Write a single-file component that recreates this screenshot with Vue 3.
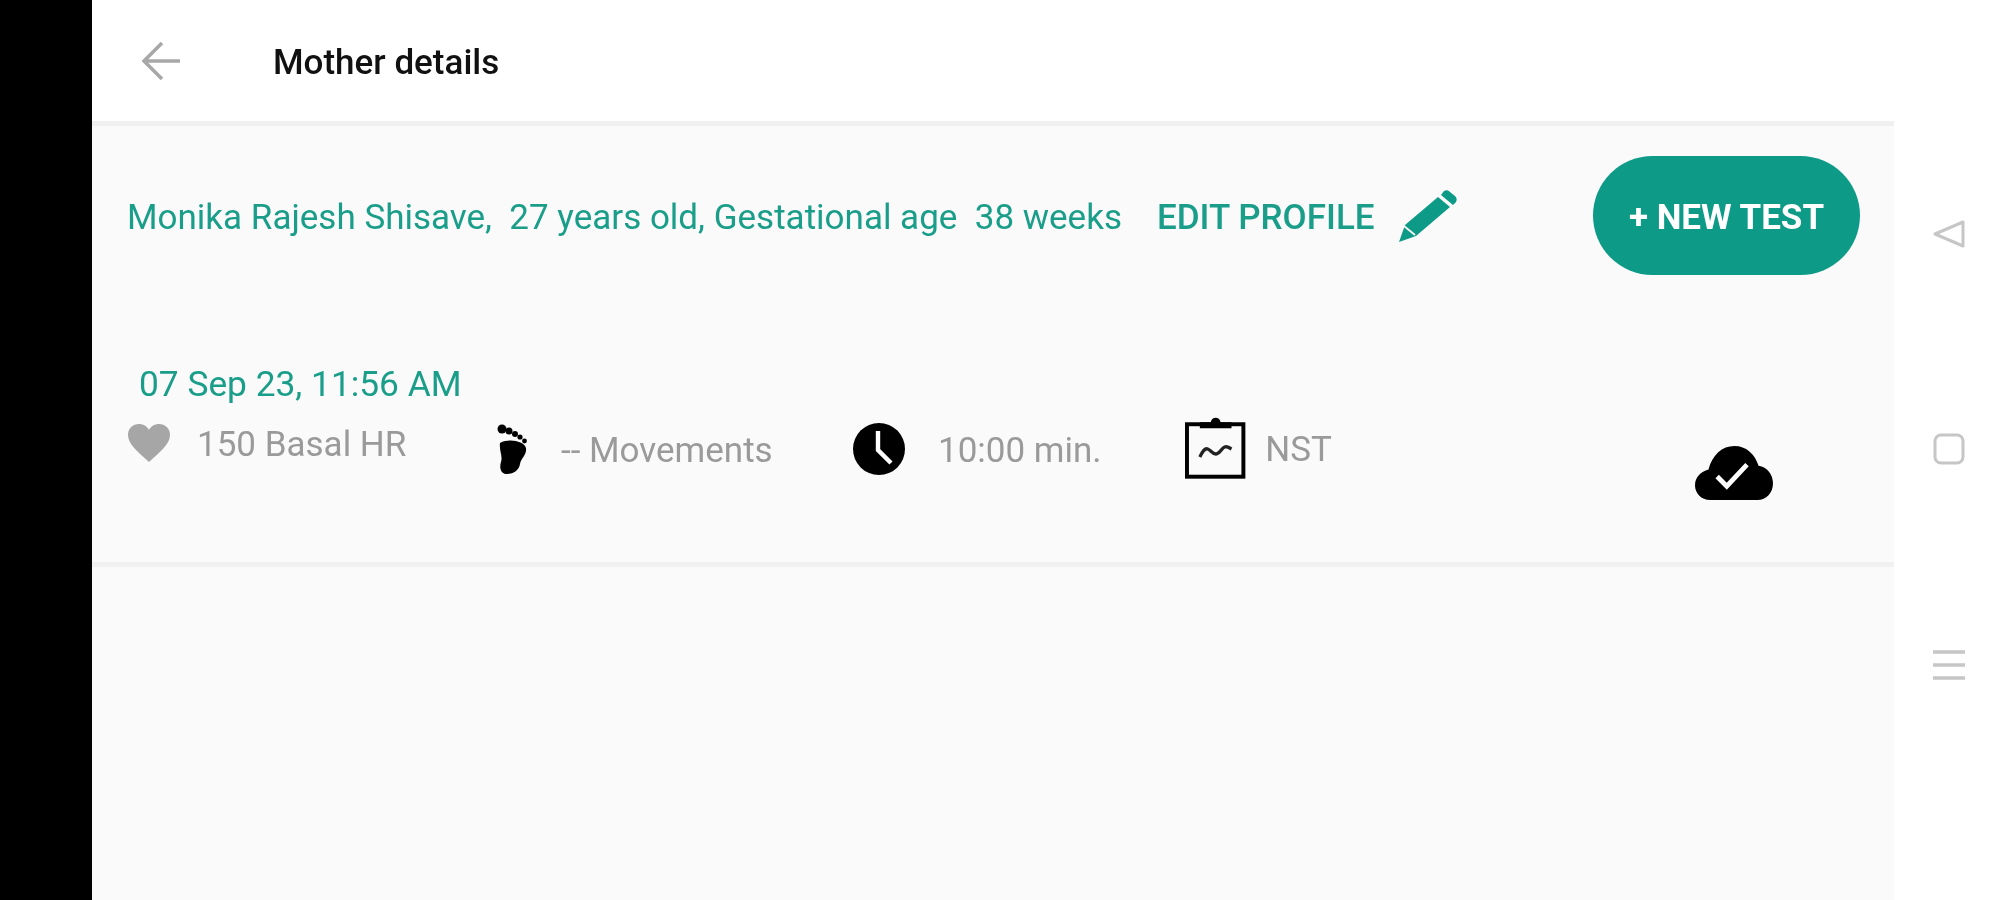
<template>
  <div class="screen">
    <div class="left-edge"></div>

    <div class="main">
      <header class="topbar">
        <svg class="back" viewBox="0 0 40 40" width="40" height="40">
          <path d="M38 20H3M20 2L2 20l18 18" fill="none" stroke="#a8a8a8" stroke-width="3.6" />
        </svg>
        <span class="title">Mother details</span>
      </header>

      <section class="record">
        <div class="patient">
          <span class="patient-name">{{ patientLine }}</span>
          <span class="edit">EDIT PROFILE</span>
          <svg class="pencil" viewBox="0 0 60 52" width="60" height="52">
            <path d="M47 1c2-1 4-1 6 1l5 4c2 2 2 4 1 6l-3 3-12-10zM41 7l12 10-34 29-17 6 6-17z" fill="#0d9b87" />
            <path d="M7 36l11 9" stroke="#fafafa" stroke-width="1.8" />
          </svg>
          <button class="new-test">+ NEW TEST</button>
        </div>

        <div class="record-date">07 Sep 23, 11:56 AM</div>

        <div class="stats">
          <div class="stat stat-hr">
            <svg viewBox="0 0 42 38" width="42" height="38">
              <path d="M21 38C9 27 0 20 0 11 0 4 5 0 11 0c4 0 8 2 10 6 2-4 6-6 10-6 6 0 11 4 11 11 0 9-9 16-21 27z" fill="#a6a6a6" />
            </svg>
            <span>150 Basal HR</span>
          </div>
          <div class="stat stat-move">
            <svg viewBox="0 0 32 50" width="32" height="50">
              <circle cx="5" cy="5" r="4.5" />
              <circle cx="12" cy="7" r="3.5" />
              <circle cx="18" cy="10" r="3" />
              <circle cx="23" cy="13" r="2.6" />
              <circle cx="27.5" cy="17" r="2.4" />
              <path d="M3 19C12 14 27 17 29 24c1 7-5 10-6 16-1 7-8 10-13 10-6 0-8-6-6-12 2-6-2-11-1-19z" />
            </svg>
            <span>-- Movements</span>
          </div>
          <div class="stat stat-time">
            <svg viewBox="0 0 52 52" width="52" height="52">
              <circle cx="26" cy="26" r="26" />
              <path d="M25 8v19l13 13" fill="none" stroke="#fff" stroke-width="4.4" />
            </svg>
            <span>10:00 min.</span>
          </div>
          <div class="stat stat-type">
            <svg viewBox="0 0 62 62" width="62" height="62">
              <rect x="2" y="7" width="57" height="53" fill="none" stroke="#000" stroke-width="4" />
              <path d="M15 5h11c1-6 9-6 10 0h11v6H15z" />
              <path d="M15 40c3-6 5-9 8-8s5 6 9 5 5-6 8-7 5 1 7 2" fill="none" stroke="#222" stroke-width="3.4" />
            </svg>
            <span>NST</span>
          </div>
          <svg class="cloud" viewBox="0 0 81 55" width="78" height="54" preserveAspectRatio="none">
            <path d="M16 55C6 55 0 48 0 40c0-8 6-14 14-16C18 9 28 0 41 0c12 0 21 8 25 20 9 1 15 9 15 18 0 10-7 17-16 17z" />
            <path d="M23 31l10 10 21-22" fill="none" stroke="#fff" stroke-width="5" />
          </svg>
        </div>
      </section>
    </div>

    <nav class="nav-rail">
      <svg viewBox="0 0 32 28" width="32" height="28">
        <path d="M2 14L30 2v24z" fill="none" stroke="#c6c6c6" stroke-width="3" stroke-linejoin="round" />
      </svg>
      <svg viewBox="0 0 32 32" width="32" height="32">
        <rect x="2" y="2" width="28" height="28" rx="6" fill="none" stroke="#c6c6c6" stroke-width="3" />
      </svg>
      <svg viewBox="0 0 32 32" width="32" height="32">
        <path d="M0 2h32M0 15h32M0 28h32" stroke="#c6c6c6" stroke-width="3.4" />
      </svg>
    </nav>
  </div>
</template>

<script setup>
const patientLine = 'Monika Rajesh Shisave,\u00a0 27 years old, Gestational age\u00a0 38 weeks'
</script>

<style>
html,
body {
  margin: 0;
  background: #fff;
}
</style>

<style scoped>
/* the source is a soft, upscaled capture, hence the slight blur */
.screen {
  display: flex;
  width: 2003px;
  height: 900px;
  overflow: hidden;
  font-family: Roboto, "Liberation Sans", sans-serif;
  background: #fff;
  filter: blur(0.6px);
}

.left-edge {
  width: 92px;
  flex-shrink: 0;
  background: #000;
}

.main {
  width: 1802px;
  flex-shrink: 0;
  background: #fafafa;
}

.topbar {
  display: flex;
  align-items: center;
  height: 121px;
  padding-left: 50px;
  background: #fff;
  border-bottom: 5px solid #f0f0f0;
}

.title {
  margin: 4px 0 0 91px;
  font-size: 35px;
  font-weight: 500;
  color: #111;
}

.record {
  height: 441px;
  box-sizing: border-box;
  border-bottom: 5px solid #f1f1f1;
}

.patient {
  display: flex;
  align-items: center;
  padding: 30px 34px 0 35px;
}

.patient-name {
  margin-top: 4px;
  font-size: 35px;
  color: #1a9e8a;
  white-space: nowrap;
}

.edit {
  margin: 4px 0 0 35px;
  font-size: 35px;
  font-weight: 500;
  color: #1a9e8a;
}

.pencil {
  margin-left: 22px;
}

.new-test {
  width: 267px;
  height: 119px;
  margin-left: auto;
  padding-top: 4px;
  border: 0;
  border-radius: 60px;
  background: #0d9b87;
  color: #fff;
  font-family: inherit;
  font-size: 35px;
  font-weight: 700;
}

.record-date {
  margin: 89px 0 0 47px;
  font-size: 35.3px;
  line-height: 40px;
  color: #1a9e8a;
}

.stats {
  display: flex;
  align-items: flex-start;
  padding: 13px 0 0 36px;
  font-size: 35px;
  line-height: 38px;
  color: #9a9a9a;
}

.stat {
  display: flex;
  align-items: center;
  white-space: nowrap;
}

.stat span {
  margin-top: 4px;
}

.stat-hr {
  width: 369px;
  gap: 27px;
  margin-top: 7px;
  align-items: flex-start;
}

.stat-hr span {
  margin-top: 2px;
}

.stat-move {
  width: 356px;
  gap: 32px;
  margin-top: 7px;
}

.stat-time {
  width: 332px;
  gap: 33px;
  margin-top: 6px;
}

.stat-type {
  width: 147px;
  gap: 19px;
}

.cloud {
  margin: 29px 0 0 363px;
}

.nav-rail {
  display: flex;
  flex-direction: column;
  align-items: flex-start;
  gap: 185px;
  padding: 220px 0 0 39px;
}
</style>
